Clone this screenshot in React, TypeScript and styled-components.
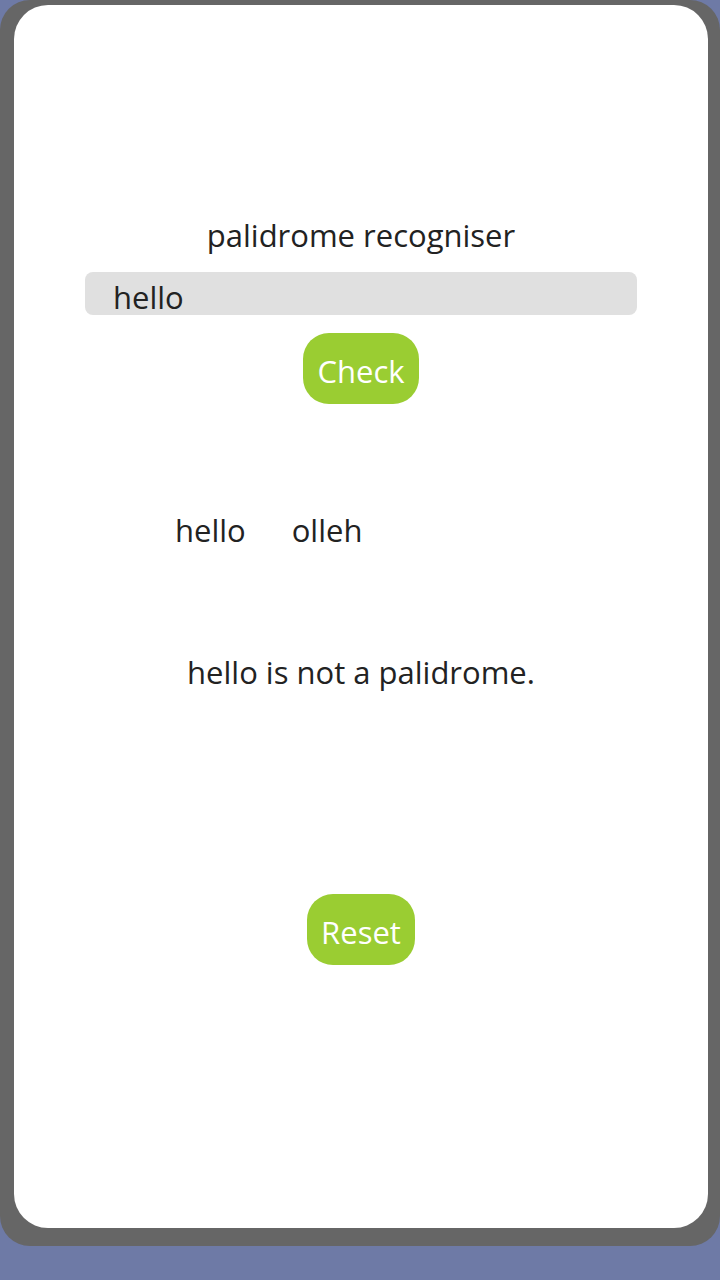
import React, { useState } from 'react';
import styled, { createGlobalStyle } from 'styled-components';

const GlobalStyle = createGlobalStyle`
    html, body {
        margin: 0;
        padding: 0;
        background: #6e7aa6;
        height: 1280px;
        overflow: hidden;
    }
    body {
        font-family: "Open Sans", "Noto Sans", sans-serif;
        color: #222;
    }
`;

const App = () => {
    const [word, setWord] = useState('hello');
    const reversed = word.split('').reverse().join('');
    const isPalindrome = word.toLowerCase() === reversed.toLowerCase();

    return (
        <>
            <GlobalStyle />
            <Phone>
                <Screen>
                    <Title>palidrome recogniser</Title>
                    <WordInput value={word} onChange={(e) => setWord(e.target.value)} />
                    <GreenButton>Check</GreenButton>
                    <MirrorRow>
                        <span>{word}</span>
                        <span>{reversed}</span>
                    </MirrorRow>
                    <Verdict>
                        {word} is {isPalindrome ? '' : 'not '}a palidrome.
                    </Verdict>
                    <ResetButton onClick={() => setWord('')}>Reset</ResetButton>
                </Screen>
            </Phone>
        </>
    );
};

const Phone = styled.div`
    box-sizing: border-box;
    width: 720px;
    height: 1246px;
    padding: 5px 12px 18px 14px;
    background: #666;
    border-radius: 30px;
`;

const Screen = styled.main`
    height: 100%;
    background: #fff;
    border-radius: 34px;
    display: flex;
    flex-direction: column;
    align-items: center;
`;

const Title = styled.h1`
    margin: 210px 0 0;
    font-size: 31px;
    font-weight: 400;
    line-height: 40px;
`;

const WordInput = styled.input`
    box-sizing: border-box;
    width: 552px;
    height: 43px;
    margin-top: 17px;
    padding: 7px 0 0 28px;
    border: none;
    outline: none;
    border-radius: 8px;
    background: #e0e0e0;
    font-family: inherit;
    font-size: 31px;
    color: #222;
`;

const GreenButton = styled.button`
    box-sizing: border-box;
    height: 71px;
    margin-top: 18px;
    padding: 4px 14px 0;
    border: none;
    border-radius: 26px;
    background: #9acd32;
    color: #fff;
    font-family: inherit;
    font-size: 31px;
`;

const ResetButton = styled(GreenButton)`
    margin-top: 202px;
`;

const MirrorRow = styled.div`
    align-self: flex-start;
    margin: 106px 0 0 161px;
    display: flex;
    gap: 46px;
    font-size: 31px;
    line-height: 40px;
`;

const Verdict = styled.p`
    margin: 102px 0 0;
    font-size: 31px;
    line-height: 40px;
`;

export default App;
